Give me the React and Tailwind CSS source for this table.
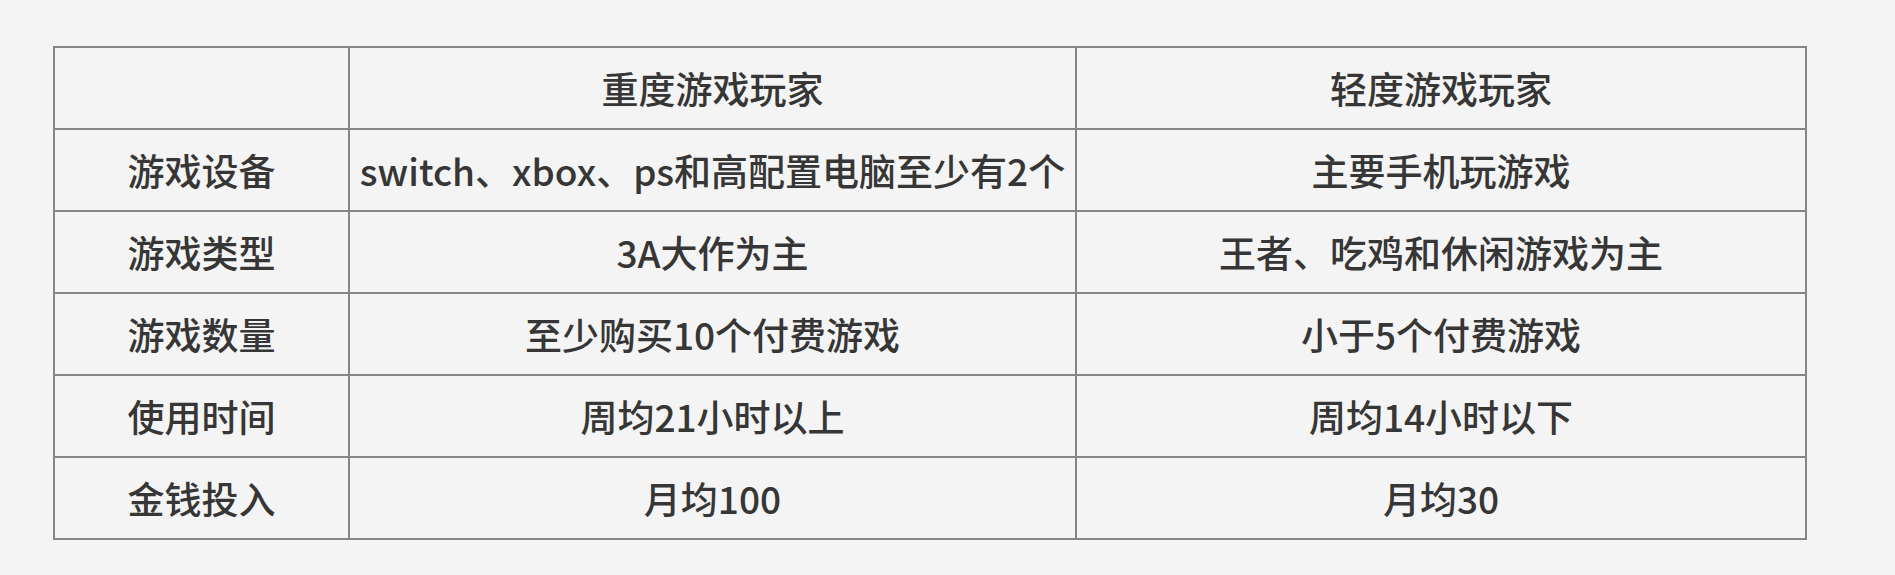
const rows = [
  ["游戏设备", "switch、xbox、ps和高配置电脑至少有2个", "主要手机玩游戏"],
  ["游戏类型", "3A大作为主", "王者、吃鸡和休闲游戏为主"],
  ["游戏数量", "至少购买10个付费游戏", "小于5个付费游戏"],
  ["使用时间", "周均21小时以上", "周均14小时以下"],
  ["金钱投入", "月均100", "月均30"],
];

function Cell({ children }) {
  return (
    <td className="border-2 border-[#858585] h-[82px] p-0 text-center align-middle">
      {children}
    </td>
  );
}

export default function App() {
  return (
    <div
      className="w-[1895px] h-[575px] bg-[#f4f4f4] pt-[46px] pl-[53px] text-[#363636] text-[37px] font-medium leading-none"
      style={{ fontFamily: '"Noto Sans CJK SC", "Noto Sans", sans-serif' }}
    >
      <table className="border-collapse table-fixed w-[1752px]">
        <colgroup>
          <col className="w-[295px]" />
          <col className="w-[727px]" />
          <col className="w-[730px]" />
        </colgroup>
        <thead>
          <tr>
            <Cell></Cell>
            <Cell>重度游戏玩家</Cell>
            <Cell>轻度游戏玩家</Cell>
          </tr>
        </thead>
        <tbody>
          {rows.map((r) => (
            <tr key={r[0]}>
              <Cell>{r[0]}</Cell>
              <Cell>{r[1]}</Cell>
              <Cell>{r[2]}</Cell>
            </tr>
          ))}
        </tbody>
      </table>
    </div>
  );
}
